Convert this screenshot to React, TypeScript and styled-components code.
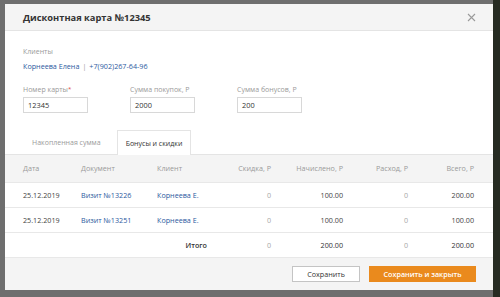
import React from "react";
import styled, { createGlobalStyle } from "styled-components";

const Global = createGlobalStyle`
  html, body { margin: 0; padding: 0; }
  body {
    width: 500px;
    height: 297px;
    overflow: hidden;
    background: linear-gradient(to right, #6e6e6e 0, #6e6e6e 493px, #262b22 493px);
    font-family: "Open Sans", "Liberation Sans", sans-serif;
  }
`;

const Overlay = styled.div`
  padding: 4px 0 0 5px;
`;

const Modal = styled.div`
  width: 488px;
  height: 286px;
  background: #fff;
  display: flex;
  flex-direction: column;
  box-sizing: border-box;
`;

const Header = styled.div`
  height: 26px;
  flex: none;
  background: #f4f4f4;
  border-bottom: 1px solid #e4e4e4;
  display: flex;
  align-items: center;
  justify-content: space-between;
  padding: 0 17px 0 18px;
`;

const Title = styled.div`
  font-size: 9.3px;
  font-weight: 700;
  color: #333;
`;

const Close = styled.button`
  border: 0;
  background: none;
  padding: 0;
  width: 9px;
  height: 9px;
  display: flex;
  cursor: pointer;
`;

const Body = styled.div`
  padding: 16px 18px 0 18px;
  display: flex;
  flex-direction: column;
`;

const Label = styled.div`
  font-size: 7px;
  color: #9a9a9a;
  line-height: 9px;
  height: 9px;
`;

const Req = styled.span`
  color: #e0463b;
  vertical-align: top;
  font-size: 6px;
`;

const ClientLine = styled.div`
  margin-top: 5px;
  font-size: 7.2px;
  line-height: 10px;
  color: #2c5aa0;
  display: flex;
  gap: 3px;
`;

const Sep = styled.span`
  color: #9a9a9a;
`;

const Fields = styled.div`
  margin-top: 14px;
  display: flex;
  gap: 42px;
`;

const Field = styled.div`
  display: flex;
  flex-direction: column;
  gap: 3px;
`;

const Input = styled.div`
  width: 65px;
  height: 16px;
  box-sizing: border-box;
  border: 1px solid #d8d8d8;
  font-size: 7.4px;
  color: #333;
  padding-left: 4px;
  display: flex;
  align-items: center;
`;

const Tabs = styled.div`
  margin-top: 17px;
  height: 24px;
  display: flex;
  padding-left: 18px;
  border-bottom: 1px solid #e4e4e4;
`;

const Tab = styled.div<{ $active?: boolean }>`
  padding: 0 8px;
  margin-right: 7px;
  font-size: 7px;
  display: flex;
  align-items: center;
  box-sizing: border-box;
  color: ${(p) => (p.$active ? "#333" : "#9a9a9a")};
  background: ${(p) => (p.$active ? "#fff" : "transparent")};
  border: 1px solid ${(p) => (p.$active ? "#e4e4e4" : "transparent")};
  border-bottom: 0;
  margin-bottom: ${(p) => (p.$active ? "-1px" : "0")};
  height: ${(p) => (p.$active ? "25px" : "24px")};
`;

const cols = "58px 76px 58px 56px 72px 65px 66px";

const Row = styled.div<{ $head?: boolean }>`
  display: grid;
  grid-template-columns: ${cols};
  padding: 0 19px 0 18px;
  height: ${(p) => (p.$head ? "28px" : "25px")};
  align-items: center;
  background: ${(p) => (p.$head ? "#f4f4f4" : "#fff")};
  border-bottom: 1px solid #e8e8e8;
  font-size: 7.2px;
  color: ${(p) => (p.$head ? "#9a9a9a" : "#444")};
`;

const Cell = styled.div<{ $align?: "right"; $tone?: "link" | "muted" | "strong" | "dark"; $pad?: number }>`
  text-align: ${(p) => p.$align || "left"};
  padding-right: ${(p) => p.$pad || 0}px;
  white-space: nowrap;
  color: ${(p) =>
    p.$tone === "link"
      ? "#2c5aa0"
      : p.$tone === "muted"
      ? "#a8a8a8"
      : p.$tone === "strong" || p.$tone === "dark"
      ? "#333"
      : "inherit"};
  font-weight: ${(p) => (p.$tone === "strong" ? 600 : 400)};
`;

const Footer = styled.div`
  margin-top: auto;
  height: 32px;
  flex: none;
  background: #f4f4f4;
  display: flex;
  align-items: center;
  justify-content: flex-end;
  gap: 9px;
  padding-right: 17px;
`;

const Button = styled.button<{ $primary?: boolean }>`
  height: 16px;
  padding: 0;
  font-family: inherit;
  font-size: 7.2px;
  font-weight: ${(p) => (p.$primary ? 600 : 400)};
  width: ${(p) => (p.$primary ? "107px" : "68px")};
  background: ${(p) => (p.$primary ? "#ea8a1d" : "#fff")};
  color: ${(p) => (p.$primary ? "#fff" : "#333")};
  border: 1px solid ${(p) => (p.$primary ? "#ea8a1d" : "#c4c4c4")};
  cursor: pointer;
`;

const rows = [
  { date: "25.12.2019", doc: "Визит №13226", client: "Корнеева Е.", disc: "0", acc: "100.00", exp: "0", total: "200.00" },
  { date: "25.12.2019", doc: "Визит №13251", client: "Корнеева Е.", disc: "0", acc: "100.00", exp: "0", total: "100.00" },
];

export default function App() {
  return (
    <>
      <Global />
      <Overlay>
        <Modal>
          <Header>
            <Title>Дисконтная карта №12345</Title>
            <Close aria-label="Закрыть">
              <svg width="9" height="9" viewBox="0 0 9 9">
                <path d="M1 1L8 8M8 1L1 8" stroke="#9a9a9a" strokeWidth="1.1" />
              </svg>
            </Close>
          </Header>
          <Body>
            <Label>Клиенты</Label>
            <ClientLine>
              <span>Корнеева Елена</span>
              <Sep>|</Sep>
              <span>+7(902)267-64-96</span>
            </ClientLine>
            <Fields>
              <Field>
                <Label>
                  Номер карты<Req>*</Req>
                </Label>
                <Input>12345</Input>
              </Field>
              <Field>
                <Label>Сумма покупок, Р</Label>
                <Input>2000</Input>
              </Field>
              <Field>
                <Label>Сумма бонусов, Р</Label>
                <Input>200</Input>
              </Field>
            </Fields>
          </Body>
          <Tabs>
            <Tab>Накопленная сумма</Tab>
            <Tab $active>Бонусы и скидки</Tab>
          </Tabs>
          <Row $head>
            <Cell>Дата</Cell>
            <Cell>Документ</Cell>
            <Cell>Клиент</Cell>
            <Cell $align="right">Скидка, Р</Cell>
            <Cell $align="right">Начислено, Р</Cell>
            <Cell $align="right">Расход, Р</Cell>
            <Cell $align="right">Всего, Р</Cell>
          </Row>
          {rows.map((r, i) => (
            <Row key={i}>
              <Cell>{r.date}</Cell>
              <Cell $tone="link">{r.doc}</Cell>
              <Cell $tone="link">{r.client}</Cell>
              <Cell $align="right" $tone="muted">{r.disc}</Cell>
              <Cell $align="right">{r.acc}</Cell>
              <Cell $align="right" $tone="muted">{r.exp}</Cell>
              <Cell $align="right">{r.total}</Cell>
            </Row>
          ))}
          <Row>
            <Cell />
            <Cell />
            <Cell $align="right" $tone="strong" $pad={8}>Итого</Cell>
            <Cell $align="right" $tone="muted">0</Cell>
            <Cell $align="right" $tone="dark">200.00</Cell>
            <Cell $align="right" $tone="muted">0</Cell>
            <Cell $align="right" $tone="dark">200.00</Cell>
          </Row>
          <Footer>
            <Button>Сохранить</Button>
            <Button $primary>Сохранить и закрыть</Button>
          </Footer>
        </Modal>
      </Overlay>
    </>
  );
}
